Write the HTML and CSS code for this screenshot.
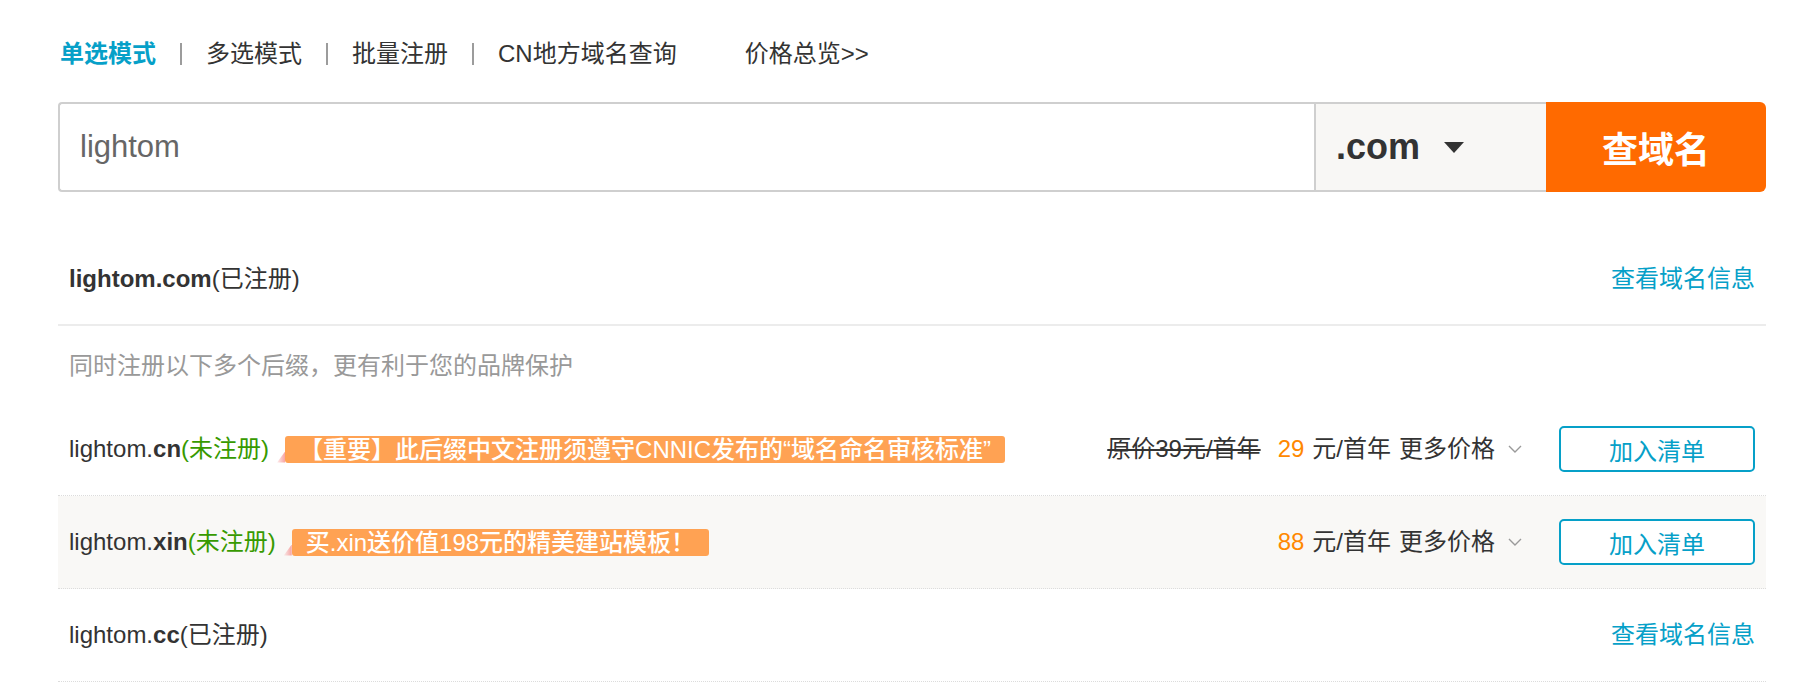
FILE: index.html
```html
<!DOCTYPE html>
<html lang="zh-CN">
<head>
<meta charset="utf-8">
<title>域名查询</title>
<link rel="stylesheet" href="styles.css">
</head>
<body>
<div class="page">
  <nav class="modes">
    <a class="mode active">单选模式</a><span class="sep"></span>
    <a class="mode">多选模式</a><span class="sep"></span>
    <a class="mode">批量注册</a><span class="sep"></span>
    <a class="mode">CN地方域名查询</a>
    <a class="mode overview">价格总览&gt;&gt;</a>
  </nav>

  <form class="search">
    <div class="field">
      <input class="query" type="text" value="lightom">
      <div class="suffix">
        <span class="suffix-text">.com</span>
        <svg class="caret" width="20" height="12" viewBox="0 0 20 12"><polygon points="0,0 20,0 10,11" fill="#333"/></svg>
      </div>
    </div>
    <button class="go" type="button">查域名</button>
  </form>

  <div class="results">
    <div class="row row-main">
      <div class="name"><b>lightom.com</b>(已注册)</div>
      <a class="info">查看域名信息</a>
    </div>
    <div class="hint">同时注册以下多个后缀，更有利于您的品牌保护</div>

    <div class="row dotted">
      <div class="name">lightom.<b>cn</b><span class="free">(未注册)</span></div>
      <span class="badge">【重要】此后缀中文注册须遵守CNNIC发布的“域名命名审核标准”</span>
      <div class="price">
        <span class="old">原价39元/首年</span>
        <span class="now">29</span>
        <span class="unit">元/首年</span>
        <span class="more">更多价格</span>
        <svg class="chev" width="14" height="8" viewBox="0 0 14 8"><polyline points="1,1 7,7 13,1" fill="none" stroke="#9a9a9a" stroke-width="1.4"/></svg>
      </div>
      <button class="add" type="button">加入清单</button>
    </div>

    <div class="row dotted alt">
      <div class="name">lightom.<b>xin</b><span class="free">(未注册)</span></div>
      <span class="badge">买.xin送价值198元的精美建站模板！</span>
      <div class="price">
        <span class="now">88</span>
        <span class="unit">元/首年</span>
        <span class="more">更多价格</span>
        <svg class="chev" width="14" height="8" viewBox="0 0 14 8"><polyline points="1,1 7,7 13,1" fill="none" stroke="#9a9a9a" stroke-width="1.4"/></svg>
      </div>
      <button class="add" type="button">加入清单</button>
    </div>

    <div class="row dotted">
      <div class="name">lightom.<b>cc</b>(已注册)</div>
      <a class="info">查看域名信息</a>
    </div>
  </div>
</div>
</body>
</html>
```

FILE: styles.css
```css
* { box-sizing: border-box; }

html, body {
  margin: 0;
  padding: 0;
  background: #fff;
}

body {
  font-family: "Liberation Sans", "Noto Sans CJK SC", sans-serif;
  font-size: 24px;
  color: #333;
}

.page {
  width: 1708px;
  margin-left: 58px;
  padding-top: 42px;
}

/* nav */
.modes {
  display: flex;
  align-items: center;
  height: 24px;
  line-height: 24px;
  padding-left: 2px;
}
.mode {
  color: #333;
  white-space: nowrap;
  cursor: pointer;
}
.mode.active {
  color: #06a0c8;
  font-weight: 700;
}
.sep {
  display: inline-block;
  width: 2px;
  height: 22px;
  background: #9c9c9c;
  margin: 0 24px;
}
.overview {
  margin-left: 68px;
}

/* search */
.search {
  display: flex;
  height: 90px;
  margin: 36px 0 0 0;
}
.field {
  flex: 1;
  display: flex;
  border: 2px solid #cfcfcf;
  border-right: 0;
  border-radius: 4px 0 0 4px;
  background: #fff;
}
.query {
  flex: 1;
  border: 0;
  outline: none;
  background: transparent;
  padding: 0 0 0 20px;
  font-family: "Liberation Sans", "Noto Sans CJK SC", sans-serif;
  font-size: 31px;
  color: #666;
}
.suffix {
  width: 232px;
  display: flex;
  align-items: center;
  border-left: 2px solid #cfcfcf;
  background: #f8f7f5;
  padding-left: 20px;
}
.suffix-text {
  font-size: 36px;
  font-weight: 700;
  color: #333;
}
.caret {
  margin-left: 24px;
  margin-top: 2px;
}
.go {
  width: 220px;
  border: 0;
  border-radius: 0 6px 6px 0;
  background: #ff6a00;
  color: #fff;
  font-family: "Liberation Sans", "Noto Sans CJK SC", sans-serif;
  font-size: 36px;
  font-weight: 700;
  cursor: pointer;
}

/* results */
.results {
  margin-top: 41px;
}
.row {
  display: flex;
  align-items: center;
  height: 93px;
  padding: 0 11px;
  line-height: 24px;
}
.row-main {
  border-bottom: 2px solid #ececec;
}
.dotted {
  border-bottom: 1px dotted #dcdcdc;
}
.alt {
  background: #f9f8f6;
}
.name {
  white-space: nowrap;
  color: #333;
}
.name b {
  font-weight: 700;
}
.free {
  color: #379a00;
}
.info {
  margin-left: auto;
  color: #06a0c8;
  cursor: pointer;
}
.hint {
  padding: 28px 11px 25px;
  line-height: 24px;
  color: #999;
}

.badge {
  position: relative;
  margin-left: 16px;
  height: 27px;
  line-height: 27px;
  padding: 0 14px;
  background: #ffa253;
  color: #fff;
  font-weight: 500;
  border-radius: 3px;
  white-space: nowrap;
}
.badge::before {
  content: "";
  position: absolute;
  left: -8px;
  bottom: 0;
  width: 8px;
  height: 11px;
  background: linear-gradient(to right, rgba(247, 150, 150, 0.15), rgba(245, 140, 140, 0.8));
  clip-path: polygon(100% 0, 100% 100%, 0 100%);
}

.price {
  margin-left: auto;
  display: flex;
  align-items: center;
  white-space: nowrap;
  color: #333;
}
.old {
  text-decoration: line-through;
  text-decoration-thickness: 2px;
  margin-right: 17px;
}
.now {
  color: #ff8800;
  margin-right: 8px;
}
.unit {
  margin-right: 8px;
}
.chev {
  margin-left: 13px;
}
.add {
  margin-left: 37px;
  width: 196px;
  height: 46px;
  border: 2px solid #06a0c8;
  border-radius: 5px;
  background: #fff;
  color: #06a0c8;
  font-family: "Liberation Sans", "Noto Sans CJK SC", sans-serif;
  font-size: 24px;
  cursor: pointer;
}
```
